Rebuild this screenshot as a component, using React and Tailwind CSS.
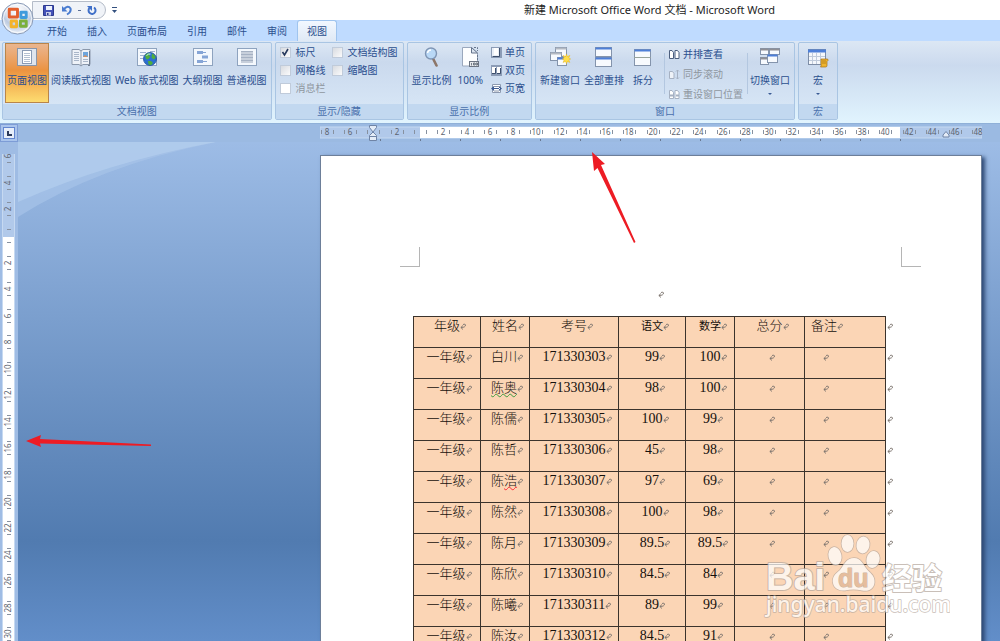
import React, { useState } from 'react';

const tabs = ['开始', '插入', '页面布局', '引用', '邮件', '审阅', '视图'];

const columns = [
  { label: '年级', width: 'w-[67px]' },
  { label: '姓名', width: 'w-[49px]' },
  { label: '考号', width: 'w-[89px]' },
  { label: '语文', width: 'w-[67px]', small: true },
  { label: '数学', width: 'w-[49px]', small: true },
  { label: '总分', width: 'w-[70px]' },
  { label: '备注', width: 'w-[81px]', left: true },
];

const students = [
  { name: '白川', id: '171330303', chinese: '99', math: '100' },
  { name: '陈奥', id: '171330304', chinese: '98', math: '100', mark: 'grammar' },
  { name: '陈儒', id: '171330305', chinese: '100', math: '99' },
  { name: '陈哲', id: '171330306', chinese: '45', math: '98' },
  { name: '陈浩', id: '171330307', chinese: '97', math: '69', mark: 'spelling' },
  { name: '陈然', id: '171330308', chinese: '100', math: '98' },
  { name: '陈月', id: '171330309', chinese: '89.5', math: '89.5' },
  { name: '陈欣', id: '171330310', chinese: '84.5', math: '84' },
  { name: '陈曦', id: '171330311', chinese: '89', math: '99' },
  { name: '陈汝', id: '171330312', chinese: '84.5', math: '91' },
];

/* ---------- icons ---------- */

const Svg = ({ size = 20, children }) => (
  <svg width={size} height={size} viewBox={`0 0 ${size} ${size}`} className="block shrink-0" aria-hidden="true">
    {children}
  </svg>
);

const Sheet = ({ x = 0.5, y = 1.5, w = 19, h = 17 }) => (
  <rect x={x} y={y} width={w} height={h} fill="#f4f8fd" stroke="#8ea3bf" />
);

const PrintLayoutIcon = () => (
  <Svg>
    <rect x="0.5" y="1.5" width="19" height="17" fill="#dfe5ee" stroke="#8a96a8" />
    <rect x="5.5" y="3.5" width="9" height="13" fill="#fff" stroke="#8a9bb5" />
    <path d="M7 6.5h6M7 8.5h6M7 10.5h6M7 12.5h6M7 14.5h6" stroke="#b4c0d2" />
  </Svg>
);

const ReadingIcon = () => (
  <Svg>
    <path d="M1 2.5h7l2 1.5 2-1.5h7v15h-7l-2 1.5-2-1.5H1z" fill="#eef2f8" stroke="#8b98ab" />
    <path d="M10 4v15" stroke="#8b98ab" />
    <path d="M3 5.5h5M3 7.5h5M3 9.5h5M3 11.5h5M3 13.5h5M12 12.5h5M12 14.5h5" stroke="#a9b6c9" />
    <rect x="12" y="5" width="5" height="5" fill="#6ea5dc" />
    <path d="M12 10l2-2 3 2z" fill="#d9905c" />
    <path d="M18.500 4v13.500M17 18.500h2" stroke="#6f7c90" />
  </Svg>
);

const WebLayoutIcon = () => (
  <Svg>
    <Sheet />
    <path d="M3 5.500h6M3 8.500h4M3 11.500h3M13 4.500h5" stroke="#9db2d2" />
    <circle cx="13" cy="12" r="6.500" fill="#2b6fd0" stroke="#1c4c98" strokeWidth=".8" />
    <path d="M8 9c1-3 4-3 5-2.500l-1 2 1.500 1-2 2.500-2 .5zM15 6.500c2 .5 3.500 2.500 3.500 4.500l-2 1.500-2-2zM11 14l3 0 2 2-2 2.200-2.500-.700z" fill="#4fae3c" />
    <path d="M9.500 8.500q2-2 4-1.500" stroke="#c9ecff" strokeWidth="1" fill="none" />
  </Svg>
);

const OutlineIcon = () => (
  <Svg>
    <Sheet />
    <path d="M4 4h6v3H4zM9 8.500h6v3H9zM4 13h6v3H4z" fill="#86a5d6" />
    <path d="M10 5.500h3M10 14.500h4" stroke="#86a5d6" />
  </Svg>
);

const DraftIcon = () => (
  <Svg>
    <Sheet />
    <rect x="4" y="4" width="12" height="12" fill="#c7cfdb" />
    <path d="M4 4.500h12M4 7.500h12M4 10.500h12M4 13.500h12" stroke="#a5b1c3" />
  </Svg>
);

const ZoomIcon = () => (
  <Svg>
    <path d="M11 11.500l3.500 7" stroke="#8d7668" strokeWidth="2.600" strokeLinecap="round" />
    <circle cx="9" cy="6.500" r="5.500" fill="#b9d8f6" stroke="#7f95b4" strokeWidth="1.400" />
    <path d="M5.500 6q.5-3 3.500-3" stroke="#fff" strokeWidth="1.500" fill="none" />
  </Svg>
);

const FullSizeIcon = () => (
  <Svg>
    <path d="M2.500 .5h9l6 5.500v13h-15z" fill="#fdfeff" stroke="#9aa8bd" />
    <path d="M11.500 .5v5.500h6z" fill="#dbe4f0" stroke="#66758c" />
    <path d="M14 .5h3.500V4M17.500 8v6" stroke="#66758c" fill="none" strokeDasharray="2 1" />
    <rect x="9.500" y="14.500" width="9" height="5" fill="#e9ebee" stroke="#6b7482" />
    <path d="M11.500 16v2.500M13.500 16h1.500v2h-1.500zM16 16h1.500v2H16z" stroke="#444d5c" strokeWidth=".7" fill="none" />
  </Svg>
);

const OnePageIcon = () => (
  <Svg size={11}>
    <rect x="0" y="0" width="11" height="11" fill="#8c9cb6" />
    <path d="M1 1h7v8H1z" fill="#e9eff7" />
    <path d="M3 1h4v7H3z" fill="#fff" />
    <path d="M8.500 1v8.500H2" stroke="#3d4f6c" fill="none" />
  </Svg>
);

const TwoPagesIcon = () => (
  <Svg size={11}>
    <rect x="0" y="0" width="11" height="11" fill="#8c9cb6" />
    <path d="M1 2h4v6H1zM6 2h4v6H6z" fill="#fff" />
    <path d="M4.500 3v5.500H1M9.500 3v5.500H6" stroke="#3d4f6c" fill="none" />
  </Svg>
);

const PageWidthIcon = () => (
  <Svg size={11}>
    <path d="M1.500 1.500h8v8h-8z" fill="#fff" stroke="#8d9ab0" />
    <path d="M3 3.500h5M3 8h5" stroke="#8b98ad" />
    <path d="M0 5.500l3-2.500v5zM11 5.500L8 3v5zM2 5h7v1H2z" fill="#3f5c93" />
  </Svg>
);

const Win = ({ x, y, w, h, bar = '#4d7fd8' }) => (
  <>
    <rect x={x} y={y} width={w} height={h} fill="#f7fafe" stroke="#8494ac" />
    <path d={`M${x} ${y + 1}h${w}`} stroke={bar} strokeWidth="2" />
  </>
);

const NewWindowIcon = () => (
  <Svg size={22}>
    <Win x={6.5} y={1.5} w={11} h={9} bar="#b3b9c2" />
    <Win x={1.5} y={6.5} w={11} h={8} bar="#b3b9c2" />
    <Win x={8.5} y={11.500} w={9} h={8} />
    <path d="M17.500 8l.8 2.600 2.600-1.200-1.200 2.600 1.900 1-1.900 1 1.200 2.400-2.600-1-.8 2.400-.9-2.400-2.600 1 1.200-2.400-1.900-1 1.900-1-1.200-2.600 2.600 1.200z" fill="#ffdf4a" stroke="#e8b41c" strokeWidth=".5" />
  </Svg>
);

const ArrangeIcon = () => (
  <Svg>
    <Win x={1.5} y={0.5} w={16} h={9} />
    <Win x={1.5} y={10.500} w={16} h={9} />
  </Svg>
);

const SplitIcon = () => (
  <Svg>
    <Win x={1.5} y={2.5} w={16} h={16} />
    <path d="M1 10.500h17" stroke="#97a39c" />
  </Svg>
);

const SideBySideIcon = ({ muted, kind = 'side' }) => {
  const line = muted ? '#a6b1c2' : '#4c5f7e';
  return (
    <Svg size={11}>
      {kind === 'sync' ? (
        <>
          <path d="M.5 9.500v-7h3l1.500 2v5z" fill="#eef2f8" stroke={line} />
          <path d="M8.500 1v9M7 2.500L8.500 1 10 2.500M7 8.500L8.500 10 10 8.500" stroke={line} fill="none" />
        </>
      ) : (
        <>
          <path d="M.5 9.500v-8h2.500l1.500 2v6zM6 9.500v-8h2.500l1.500 2v6z" fill="#fff" stroke={line} />
          {kind === 'reset' && <path d="M1 6.500h3M7 6.500h3" stroke={line} strokeWidth="2" />}
        </>
      )}
    </Svg>
  );
};

const SwitchWindowIcon = () => (
  <Svg size={22}>
    <Win x={1.5} y={2.5} w={8} h={6} bar="#8f8f94" />
    <Win x={10.500} y={2.5} w={10} h={6} bar="#8f8f94" />
    <Win x={1.5} y={11.500} w={8} h={7} bar="#8f8f94" />
    <Win x={8.5} y={8.5} w={10} h={8} />
  </Svg>
);

const MacroIcon = () => (
  <Svg size={22}>
    <rect x="1.500" y="3.500" width="17" height="15" fill="#f5f8fc" stroke="#7d8da6" />
    <path d="M1 5h18" stroke="#4d7fd8" strokeWidth="3" />
    <path d="M5.500 7v11M9.500 7v11M13.500 7v11M2 10.500h16M2 14.500h16" stroke="#c0cbdb" />
    <path d="M14 13h6q1.500 0 1 1.500l-1 1v4q0 1.500-1.500 1.500h-5q1-1 .5-2.500z" fill="#efb52f" stroke="#a36f14" strokeWidth=".7" />
    <path d="M15 15h4M15 17h4" stroke="#a36f14" strokeWidth=".7" />
  </Svg>
);

const OfficeLogo = () => (
  <svg width="33" height="33" viewBox="0 0 34 34" aria-hidden="true">
    <defs>
      <radialGradient id="orb" cx="50%" cy="25%" r="80%">
        <stop offset="0" stopColor="#ffffff" />
        <stop offset=".45" stopColor="#dde3ee" />
        <stop offset=".6" stopColor="#bccae0" />
        <stop offset="1" stopColor="#f6faff" />
      </radialGradient>
    </defs>
    <circle cx="17" cy="17" r="16" fill="url(#orb)" stroke="#8798b4" />
    <circle cx="17" cy="17" r="14.500" fill="none" stroke="#fff" opacity=".8" />
    <g fill="none" strokeWidth="3" strokeLinejoin="round">
      <path d="M17 15.500H8.500V7.500H17z" stroke="#e4602c" />
      <path d="M20.500 10.500h5.500v5.500h-5.500z" stroke="#3f9bdc" />
      <path d="M10.500 19.500h5.500v6h-5.500z" stroke="#f3b32a" />
      <path d="M20 19.500h6v5.500h-6z" stroke="#7ab03a" />
    </g>
  </svg>
);

const ReturnMark = () => (
  <svg width="6" height="7" viewBox="0 0 6 7" className="inline-block align-baseline" aria-hidden="true">
    <path d="M3 1.500q2.500-1 2.500.5 0 2.500-4.500 2.500M3 2.500L.8 4.500 3 6.500" stroke="#7a736d" strokeWidth=".9" fill="none" />
  </svg>
);

const Caret = () => (
  <svg width="4" height="2" viewBox="0 0 4 2" className="mt-1.5" aria-hidden="true">
    <path d="M0 0h4L2 2z" fill="#3a5a94" />
  </svg>
);

/* ---------- ribbon pieces ---------- */

const RibbonButton = ({ icon, label, active, caret, wide }) => (
  <button
    className={`flex h-[60px] flex-col items-center border px-px pt-[2px] whitespace-nowrap ${wide ? 'min-w-[34px]' : ''} ${
      active
        ? 'border-[#b9854a] bg-linear-to-b from-[#eab68f] via-[#eb9340] via-45% to-[#fddc70]'
        : 'border-transparent'
    }`}
  >
    <span className="flex h-[22px] items-center">{icon}</span>
    <span className="mt-[5px] leading-[14px]">{label}</span>
    {caret && <Caret />}
  </button>
);

const SmallButton = ({ icon, label, disabled }) => (
  <button disabled={disabled} className={`flex items-center gap-[3px] whitespace-nowrap ${disabled ? 'text-[#8f979f]' : ''}`}>
    {icon}
    {label}
  </button>
);

const Divider = () => <span className="my-2.5 w-px bg-[#b3c7e0]" />;

const Group = ({ title, className = '', children }) => (
  <section className="flex flex-col rounded-[2px] border border-[#a9c5e3] bg-linear-to-b from-[#dce7f4] via-[#cad9ed] via-25% to-[#dae9f8]">
    <div className={`flex h-[61px] ${className}`}>{children}</div>
    <h2 className="h-[15px] bg-[#c2d8f0] text-center leading-[14px] text-[#4a70ac]">{title}</h2>
  </section>
);

const CheckOption = ({ label, defaultChecked, disabled }) => {
  const [checked, setChecked] = useState(!!defaultChecked);
  return (
    <label className={`flex items-center gap-[5px] whitespace-nowrap ${disabled ? 'text-[#8f979f]' : ''}`}>
      <span className="relative flex">
        <input
          type="checkbox"
          checked={checked}
          disabled={disabled}
          onChange={() => setChecked(!checked)}
          className="size-[11px] appearance-none border border-[#c0cbda] bg-linear-to-br from-[#d8dbe0] to-[#fbfbfc] disabled:from-white disabled:to-white"
        />
        {checked && (
          <svg width="11" height="11" viewBox="0 0 11 11" className="pointer-events-none absolute inset-0" aria-hidden="true">
            <path d="M2.500 5l2 3 3.500-6" stroke="#26385c" strokeWidth="1.600" fill="none" />
          </svg>
        )}
      </span>
      {label}
    </label>
  );
};

const Ribbon = () => (
  <div className="flex gap-[3px] border-b border-[#8fb0d8] bg-linear-to-b from-[#dce7f4] via-[#cbdaee] via-30% to-[#e1f4fe] px-0.5 pt-px pb-[3px]">
    <Group title="文档视图" className="px-0.5">
      <RibbonButton icon={<PrintLayoutIcon />} label="页面视图" active />
      <RibbonButton icon={<ReadingIcon />} label="阅读版式视图" />
      <RibbonButton icon={<WebLayoutIcon />} label="Web 版式视图" />
      <RibbonButton icon={<OutlineIcon />} label="大纲视图" />
      <RibbonButton icon={<DraftIcon />} label="普通视图" />
    </Group>

    <Group title="显示/隐藏" className="px-1">
      <div className="grid grid-cols-[52px_auto] content-start pr-px *:h-[18px]">
        <CheckOption label="标尺" defaultChecked />
        <CheckOption label="文档结构图" />
        <CheckOption label="网格线" />
        <CheckOption label="缩略图" />
        <CheckOption label="消息栏" disabled />
      </div>
    </Group>

    <Group title="显示比例" className="gap-0.5 px-0.5">
      <RibbonButton icon={<ZoomIcon />} label="显示比例" />
      <RibbonButton icon={<FullSizeIcon />} label="100%" />
      <div className="flex flex-col pr-1 pl-1 *:h-[18px]">
        <SmallButton icon={<OnePageIcon />} label="单页" />
        <SmallButton icon={<TwoPagesIcon />} label="双页" />
        <SmallButton icon={<PageWidthIcon />} label="页宽" />
      </div>
    </Group>

    <Group title="窗口" className="px-0.5">
      <RibbonButton icon={<NewWindowIcon />} label="新建窗口" />
      <RibbonButton icon={<ArrangeIcon />} label="全部重排" />
      <RibbonButton icon={<SplitIcon />} label="拆分" wide />
      <div className="flex gap-1 pl-1">
        <Divider />
        <div className="flex flex-col pt-px *:h-5">
          <SmallButton icon={<SideBySideIcon />} label="并排查看" />
          <SmallButton icon={<SideBySideIcon muted kind="sync" />} label="同步滚动" disabled />
          <SmallButton icon={<SideBySideIcon muted kind="reset" />} label="重设窗口位置" disabled />
        </div>
        <Divider />
      </div>
      <RibbonButton icon={<SwitchWindowIcon />} label="切换窗口" caret />
    </Group>

    <Group title="宏" className="px-0.5">
      <RibbonButton icon={<MacroIcon />} label="宏" caret wide />
    </Group>
  </div>
);

/* ---------- rulers ---------- */

const evens = (from, to) => Array.from({ length: (to - from) / 2 + 1 }, (_, i) => from + i * 2);

const HorizontalRuler = () => {
  const zero = 100;
  const at = (n) => Math.round(zero + (n / 2) * 23.27);
  return (
    <svg width="662" height="18" viewBox="0 0 662 18" className="block" aria-label="水平标尺">
      <rect x="0" y="3" width="662" height="11" fill="#b1c9ea" stroke="#c6d9f1" />
      <rect x={zero} y="3" width="480" height="11" fill="#fff" />
      {evens(-8, 48).map((n) => (
        <g key={n}>
          {n !== 0 && n !== -4 && (
            <text x={at(n)} y="11" textAnchor="middle" fontSize="8" fill="#5d646f">{Math.abs(n)}</text>
          )}
          <path d={`M${at(n) - 6}.5 6v4M${at(n) + 6}.5 6v4`} stroke="#8791a0" />
        </g>
      ))}
      {evens(0, 26).map((n) => (
        <path key={n} d={`M${60 + n * 20}.5 15v2`} stroke="#6a7890" />
      ))}
      <path d="M49.500 1.500h7v2l-3.500 4.500-3.500-4.500zM53 8l3.500 3.500v5h-7v-5zM49.500 12.500h7" fill="#e4ecf7" stroke="#6f84a6" />
      <path d="M626 7.500l3 3.500v2h-6v-2z" fill="#e4ecf7" stroke="#6f84a6" />
    </svg>
  );
};

const VerticalRuler = () => {
  const zero = 94;
  const at = (n) => Math.round(zero + (n / 2) * 26.55);
  return (
    <svg width="18" height="100%" className="block" aria-label="垂直标尺">
      <rect x="2" y="12" width="12" height="100%" fill="#b1c9ea" />
      <rect x="3" y={zero + 1} width="11" height="100%" fill="#fff" />
      <path d="M2.500 12v2000M14.500 12v2000" stroke="#c6d9f1" />
      {evens(-6, 30).map((n) => (
        <g key={n}>
          {n !== 0 && (
            <text transform={`translate(11 ${at(n)}) rotate(-90)`} textAnchor="middle" fontSize="8" fill="#5d646f">
              {Math.abs(n)}
            </text>
          )}
          {n !== -6 && <path d={`M7 ${at(n) - 7}.5h4`} stroke="#8791a0" />}
          <path d={`M7 ${at(n) + 6}.5h4`} stroke="#8791a0" />
        </g>
      ))}
    </svg>
  );
};

/* ---------- document ---------- */

const StudentName = ({ name, mark }) => {
  if (mark === 'grammar') {
    return <span className="underline decoration-[#3f9b3f] decoration-wavy decoration-1 underline-offset-1">{name}</span>;
  }
  if (mark === 'spelling') {
    return (
      <>
        {name[0]}
        <span className="underline decoration-red-500 decoration-wavy decoration-1 underline-offset-1">{name[1]}</span>
      </>
    );
  }
  return name;
};

const cell = 'h-[31px] border border-[#3b332c] bg-[#fbd5b5] p-0 align-top font-light whitespace-nowrap';

const ScoreTable = () => (
  <table className="w-[484px] table-fixed border-collapse font-['Liberation_Serif','Noto_Sans_CJK_SC',serif] text-[13px] leading-[18px] font-light text-[#15100c]">
    <thead>
      <tr>
        {columns.map((c) => (
          <th key={c.label} className={`${cell} ${c.width} pl-1.5 ${c.left ? 'text-left' : 'text-center'}`}>
            <span className={c.small ? 'text-[11px] font-normal' : ''}>{c.label}</span>
            <ReturnMark />
          </th>
        ))}
        <td className="w-3 pl-px align-top"><ReturnMark /></td>
      </tr>
    </thead>
    <tbody>
      {students.map((s) => (
        <tr key={s.id}>
          <td className={`${cell} pl-1 text-center`}>一年级<ReturnMark /></td>
          <td className={`${cell} pl-1 text-center`}><StudentName name={s.name} mark={s.mark} /><ReturnMark /></td>
          <td className={`${cell} pl-1.5 text-center text-[14px]`}>{s.id}<ReturnMark /></td>
          <td className={`${cell} pl-1.5 text-center text-[14px]`}>{s.chinese}<ReturnMark /></td>
          <td className={`${cell} pl-1.5 text-center text-[14px]`}>{s.math}<ReturnMark /></td>
          <td className={`${cell} pl-1 text-center`}><ReturnMark /></td>
          <td className={`${cell} pl-[18px]`}><ReturnMark /></td>
          <td className="pl-px align-top"><ReturnMark /></td>
        </tr>
      ))}
    </tbody>
  </table>
);

const DocumentPage = () => (
  <article className="relative mt-[13px] h-[935px] w-[662px] shrink-0 border border-[#6d7f99] bg-white pt-[91px] shadow-[3px_2px_4px_#2f4a75]">
    <div className="flex justify-between pr-[60px] pl-[79px]">
      <span className="size-5 border-r border-b border-[#b5b5b5]" />
      <span className="size-5 border-b border-l border-[#b5b5b5]" />
    </div>
    <p className="mt-4 flex h-[33px] items-start justify-center pt-2 pl-5"><ReturnMark /></p>
    <div className="pl-[92px]">
      <ScoreTable />
    </div>
    <svg width="46" height="92" viewBox="0 0 46 92" className="pointer-events-none absolute -top-1 left-[271px]" aria-hidden="true">
      <path d="M0 0l13 12-4 1 34.500 77-1.500 1L5.500 16 2 19z" fill="#ed1c24" />
    </svg>
  </article>
);

const Watermark = () => (
  <svg width="190" height="92" viewBox="0 0 190 92" className="pointer-events-none absolute right-[50px] bottom-4" aria-hidden="true">
    <g
      fill="#fff"
      stroke="#b5a79d"
      strokeWidth="2"
      strokeLinejoin="round"
      paintOrder="stroke"
      opacity=".72"
      fontFamily="Liberation Sans, Noto Sans CJK SC, sans-serif"
    >
      <text x="6" y="57" fontSize="38" fontWeight="bold">Bai</text>
      <g strokeWidth="1.500">
        <ellipse cx="75" cy="23" rx="6.500" ry="9" transform="rotate(-12 75 23)" />
        <ellipse cx="87.500" cy="10.500" rx="6" ry="8.500" />
        <ellipse cx="103" cy="12" rx="6.500" ry="8.500" transform="rotate(10 103 12)" />
        <ellipse cx="113" cy="26.500" rx="6.500" ry="8.500" transform="rotate(14 113 26.500)" />
        <path d="M94 25c-8 0-10 7-14 12-5 4-8 7-7 13s7 8 12 7.500c6-1.500 11-1.500 17 0 7 1.500 12-2 12.500-8 .5-6-3-8.500-7-12.500-4.500-5-6-12-13.500-12z" />
      </g>
      <text x="78" y="54" fontSize="25" fontWeight="bold" fill="#dfb594" strokeWidth="1">du</text>
      <text x="122" y="56" fontSize="30" fontWeight="bold">经验</text>
      <text x="6" y="79" fontSize="21" fontFamily="Noto Sans, sans-serif" fontWeight="500" strokeWidth="1.500">jingyan.baidu.com</text>
    </g>
  </svg>
);

const Workspace = () => (
  <main className="flex min-h-0 flex-1 bg-[#9fbce4]">
    <div className="w-[18px] shrink-0">
      <VerticalRuler />
    </div>
    <div className="relative flex min-w-0 flex-1 justify-end overflow-hidden bg-linear-to-b from-[#9dbce6] via-[#517bb0] via-80% to-[#628ec9] pr-[18px]">
      <svg width="200" height="78" viewBox="0 0 200 78" className="absolute top-0 left-0" aria-hidden="true">
        <path d="M0 0h198Q80 24 0 75z" fill="#a6c3e8" opacity=".7" />
        <path d="M0 0h198Q90 20 0 60z" fill="#b3ceee" opacity=".75" />
      </svg>
      <DocumentPage />
      <svg width="126" height="14" viewBox="0 0 126 14" className="pointer-events-none absolute top-[292px] left-2" aria-hidden="true">
        <path d="M0 7L15 1l-1 4 111 5.500v1.500L14 9.500l1 3.500z" fill="#ed1c24" />
      </svg>
      <Watermark />
    </div>
  </main>
);

/* ---------- window frame ---------- */

const QuickAccess = () => (
  <div className="flex w-[299px] shrink-0 items-center gap-2 pl-8">
    <div className="flex h-[18px] w-[74px] items-center rounded-r-full border border-[#b5bcc8] bg-[#f0f3f8] pl-2.5">
      <button aria-label="保存">
        <svg width="11" height="11" viewBox="0 0 11 11">
          <path d="M.5.500h10v10h-10z" fill="#4351b8" stroke="#2d3a8e" />
          <path d="M3 1h6v4H3z" fill="#eef2fb" />
          <path d="M3 7h5v3.500H3z" fill="#c6cde8" />
          <path d="M4 8h1.500v2H4z" fill="#2d3a8e" />
        </svg>
      </button>
      <button aria-label="撤消" className="ml-2">
        <svg width="10" height="11" viewBox="0 0 10 11">
          <path d="M1.500 4.500Q6-.5 8.500 3.500 9.500 7 5 9.500" stroke="#4a7cd0" strokeWidth="2" fill="none" />
          <path d="M0 1v5.500h5.500z" fill="#4a7cd0" />
        </svg>
      </button>
      <span className="ml-1.5 h-px w-[3px] bg-[#5b6f96]" />
      <button aria-label="恢复" className="ml-1.5">
        <svg width="10" height="11" viewBox="0 0 10 11">
          <path d="M7 2.500A3.500 3.500 0 1 1 2.500 3" stroke="#3f6fc8" strokeWidth="2" fill="none" />
          <path d="M0 1h5v5z" fill="#3f6fc8" />
        </svg>
      </button>
    </div>
    <button aria-label="自定义快速访问工具栏" className="-ml-1.5 flex flex-col items-center pl-1">
      <svg width="5" height="6" viewBox="0 0 5 6">
        <path d="M0 .5h5" stroke="#33507f" />
        <path d="M0 3h5L2.500 6z" fill="#33507f" />
      </svg>
    </button>
  </div>
);

const App = () => {
  const [activeTab, setActiveTab] = useState('视图');

  return (
    <div className="relative flex h-screen flex-col overflow-hidden bg-white font-['Noto_Sans','Noto_Sans_CJK_SC',sans-serif] text-[10px] text-[#2b4f8e]">
      <header className="flex h-5 shrink-0 items-center">
        <QuickAccess />
        <h1 className="flex-1 text-center text-[11px] whitespace-nowrap text-[#1d1d1d]">
          新建 Microsoft Office Word 文档 - Microsoft Word
        </h1>
      </header>
      <button aria-label="Office 按钮" className="absolute top-0.5 left-px z-10">
        <OfficeLogo />
      </button>

      <nav className="flex h-[21px] shrink-0 bg-[#bfdbff] pl-[37px]">
        {tabs.map((tab) => (
          <button
            key={tab}
            onClick={() => setActiveTab(tab)}
            className={`rounded-t-[3px] border border-b-0 px-[9px] leading-5 ${
              activeTab === tab ? 'border-[#9fc4ee] bg-linear-to-b from-[#f2f8ff] to-[#dfe9f5]' : 'border-transparent'
            }`}
          >
            {tab}
          </button>
        ))}
      </nav>

      <div className="shrink-0">
        <Ribbon />
      </div>

      <div className="flex h-[18px] shrink-0 items-center justify-between bg-[#9bbae2] pr-[18px]">
        <button aria-label="制表符" className="flex size-[18px] items-center justify-center border border-[#7d9cd6] bg-[#a9c4ec]">
          <svg width="12" height="12" viewBox="0 0 12 12">
            <rect x=".5" y=".5" width="11" height="11" fill="#e6eefa" stroke="#6286cf" />
            <path d="M5 4v4h4" stroke="#2b3a5c" strokeWidth="2" fill="none" />
          </svg>
        </button>
        <HorizontalRuler />
      </div>

      <Workspace />
    </div>
  );
};

export default App;
